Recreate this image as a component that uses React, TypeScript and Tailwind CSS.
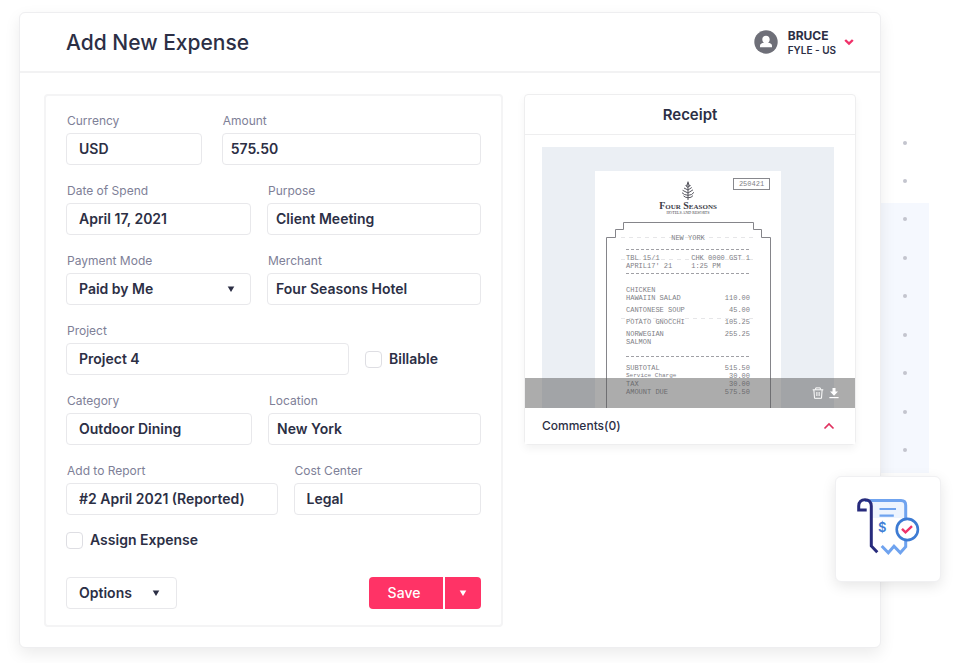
import { useState, type ReactNode } from "react";

const receiptItems = [
  { name: ["CHICKEN", "HAWAIIN SALAD"], price: "110.00", align: "align-bottom" },
  { name: ["CANTONESE SOUP"], price: "45.00", align: "align-top" },
  { name: ["POTATO GNOCCHI"], price: "105.25", align: "align-top" },
  { name: ["NORWEGIAN", "SALMON"], price: "255.25", align: "align-top" },
];

const receiptTotals = [
  ["SUBTOTAL", "515.50"],
  ["Service Charge", "30.00"],
  ["TAX", "30.00"],
  ["AMOUNT DUE", "575.50"],
];

export default function App() {
  const [billable, setBillable] = useState(false);
  const [assigned, setAssigned] = useState(false);

  return (
    <div className="relative flex min-h-screen items-start bg-white pt-3 pl-[19px] font-['Inter',sans-serif] text-[#2c2f45]">
      <main className="relative z-10 min-w-0 flex-1 rounded-md border border-[#eeeef0] bg-white shadow-[0_6px_16px_rgba(0,0,0,0.08)]">
        <header className="flex h-[60px] items-center justify-between border-b-2 border-[#f2f2f3] pr-[26px] pl-[46px]">
          <h1 className="pt-0.5 text-[21px] leading-7 font-medium">Add New Expense</h1>
          <button className="flex items-center text-left">
            <AvatarIcon />
            <span className="ml-[10px]">
              <span className="block text-xs leading-4 font-bold">BRUCE</span>
              <span className="block text-[10px] leading-3 font-semibold">FYLE - US</span>
            </span>
            <svg className="ml-2 h-2 w-[10px]" viewBox="0 0 10 8" fill="none">
              <path d="M1.2 2 5 5.6 8.8 2" stroke="#f0326a" strokeWidth="2.4" />
            </svg>
          </button>
        </header>

        <div className="grid grid-cols-[459fr_332fr] items-start gap-[21px] px-6 pt-[21px] pb-5">
          <form
            className="rounded-sm border-2 border-[#f4f4f5] px-5 pt-[17px] pb-4"
            onSubmit={(e) => e.preventDefault()}
          >
            <div className="flex flex-col gap-[18px]">
              <div className="grid grid-cols-[136fr_260fr] gap-5">
                <Field id="currency" label="Currency" value="USD" />
                <Field id="amount" label="Amount" value="575.50" tight />
              </div>

              <div className="grid grid-cols-[185fr_214fr] gap-4">
                <Field id="date" label="Date of Spend" value="April 17, 2021" />
                <Field id="purpose" label="Purpose" value="Client Meeting" tight />
              </div>

              <div className="grid grid-cols-[185fr_214fr] gap-4">
                <FieldFrame id="mode" label="Payment Mode">
                  <div className="relative">
                    <select
                      id="mode"
                      className="h-8 w-full appearance-none rounded border border-[#e8e8eb] bg-white px-3 text-sm font-semibold outline-none"
                    >
                      <option>Paid by Me</option>
                      <option>Paid by Company</option>
                    </select>
                    <Caret className="pointer-events-none absolute top-3 right-4" />
                  </div>
                </FieldFrame>
                <Field id="merchant" label="Merchant" value="Four Seasons Hotel" tight />
              </div>

              <div className="grid grid-cols-[283fr_116fr] items-end gap-4">
                <Field id="project" label="Project" value="Project 4" />
                <div className="flex h-8 items-center">
                  <Tick id="billable" label="Billable" checked={billable} onChange={setBillable} />
                </div>
              </div>

              <div className="grid grid-cols-[187fr_214fr] gap-4">
                <Field id="category" label="Category" value="Outdoor Dining" />
                <Field id="location" label="Location" value="New York" tight />
              </div>

              <div className="grid grid-cols-[211fr_187fr] gap-4">
                <Field id="report" label="Add to Report" value="#2 April 2021 (Reported)" />
                <Field id="cost" label="Cost Center" value="Legal" />
              </div>
            </div>

            <div className="mt-4">
              <Tick id="assign" label="Assign Expense" checked={assigned} onChange={setAssigned} />
            </div>

            <div className="mt-7 flex items-center justify-between">
              <button
                type="button"
                className="flex h-8 items-center gap-5 rounded border border-[#e8e8eb] pr-4 pl-3 text-sm font-semibold"
              >
                Options
                <Caret />
              </button>
              <div className="flex h-8 gap-0.5 text-white">
                <button type="submit" className="w-[74px] rounded-l bg-[#ff3366] pr-1 text-sm font-medium">
                  Save
                </button>
                <button
                  type="button"
                  aria-label="More save options"
                  className="flex w-9 items-center justify-center rounded-r bg-[#ff3366]"
                >
                  <Caret />
                </button>
              </div>
            </div>
          </form>

          <ReceiptPanel />
        </div>
      </main>

      <aside className="w-[79px] shrink-0 pt-[129px]">
        <div className="flex w-12 flex-col items-center gap-[34px]">
          <Dot />
          <Dot />
        </div>
        <div className="mt-5 flex h-[270px] w-12 flex-col items-center justify-between bg-[#f5f8fe] pt-[14px] pb-[21px]">
          {[1, 2, 3, 4, 5, 6, 7].map((n) => (
            <Dot key={n} />
          ))}
        </div>
      </aside>

      <div className="absolute top-[476px] right-[19px] z-20 flex h-[106px] w-[106px] items-center justify-center rounded-md border border-[#f0f0f2] bg-white shadow-[0_4px_14px_rgba(0,0,0,0.1)]">
        <ExpenseIcon />
      </div>
    </div>
  );
}

function ReceiptPanel() {
  return (
    <section className="rounded-sm border border-[#eeeeef] shadow-[0_4px_8px_rgba(0,0,0,0.05)]">
      <h2 className="border-b border-[#eeeeef] text-center text-[15px] leading-[39px] font-semibold">
        Receipt
      </h2>

      <div className="relative pt-3 pr-[21px] pl-[17px]">
        <div className="flex justify-center bg-[#ebeff4] pt-6">
          <Paper />
        </div>
        <div className="absolute inset-x-0 bottom-0 flex h-[30px] items-center justify-end gap-[5px] bg-[#595959]/50 pr-4">
          <button aria-label="Delete receipt">
            <svg className="h-3 w-3" viewBox="0 0 12 12" fill="none" stroke="#fff">
              <path d="M.7 2.8h10.6M3.7 2.6V.9h4.6v1.7M1.9 3l.6 8.3h7L10.1 3" />
              <path d="M4.6 5v4M6 5v4M7.4 5v4" strokeWidth=".7" />
            </svg>
          </button>
          <button aria-label="Download receipt">
            <svg className="h-3 w-[10px]" viewBox="0 0 10 12" fill="#fff">
              <path d="M3.5 1h3v3.6H9L5 8.8 1 4.6h2.5z" />
              <path d="M.4 10h9.2v1.2H.4z" />
            </svg>
          </button>
        </div>
      </div>

      <button className="flex h-9 w-full items-center justify-between bg-white pr-5 pl-[17px] text-xs font-medium">
        Comments(0)
        <svg className="h-2 w-3" viewBox="0 0 12 8" fill="none">
          <path d="M1.5 6.5 6 2l4.5 4.5" stroke="#e0315f" strokeWidth="1.7" />
        </svg>
      </button>
    </section>
  );
}

function Paper() {
  return (
    <div className="relative h-[237px] w-[186px] bg-white pt-[10px] text-[7px] leading-2 text-[#808086]">
      <svg className="absolute inset-0 h-full w-full" viewBox="0 0 186 237" fill="none">
        <path
          d="M11.5 237V66.5H20.5V58.5H28.5V51.5H158.5V58.5H166.5V66.5H175.5V237"
          stroke="#85858a"
        />
        <path
          d="M26 66.5H158M26 88.5H158M26 147.5H158"
          stroke="#e6e6e8"
          strokeDasharray="4 4"
        />
      </svg>
      <span className="absolute top-[7px] right-[11px] flex h-3 w-[37px] items-center justify-center border border-[#88888d] font-['Liberation_Mono',monospace]">
        250421
      </span>

      <div className="relative flex flex-col items-center font-['Liberation_Serif',serif] font-bold text-[#3c3c46]">
        <TreeIcon />
        <span className="text-[10px] leading-[10px] [font-variant:small-caps]">Four Seasons</span>
        <span className="text-[4px] leading-1 font-normal">HOTELS AND RESORTS</span>
      </div>

      <div className="relative mt-[19px] px-[31px] font-['Liberation_Mono',monospace]">
        <p className="text-center">NEW YORK</p>
        <Dashes className="mt-[7px]" />
        <div className="mt-1 flex justify-between whitespace-nowrap">
          <p>
            TBL 15/1
            <br />
            APRIL17&apos; 21
          </p>
          <p>
            CHK 0000 GST 1
            <br />
            1:25 PM
          </p>
        </div>
        <Dashes className="mt-[3px]" />
        <table className="mt-[10px] w-full">
          <tbody>
            {receiptItems.map((item) => (
              <tr key={item.price}>
                <td className="py-0.5">
                  {item.name.map((line) => (
                    <span key={line} className="block">
                      {line}
                    </span>
                  ))}
                </td>
                <td className={`py-0.5 text-right ${item.align}`}>{item.price}</td>
              </tr>
            ))}
          </tbody>
        </table>
        <Dashes className="mt-2" />
        <table className="mt-[7px] w-full">
          <tbody>
            {receiptTotals.map(([name, price]) => (
              <tr key={name}>
                <td className={`p-0 leading-2 ${name === "Service Charge" ? "text-[6px]" : ""}`}>
                  {name}
                </td>
                <td className="p-0 text-right">{price}</td>
              </tr>
            ))}
          </tbody>
        </table>
      </div>
    </div>
  );
}

function FieldFrame({ id, label, children }: { id: string; label: string; children: ReactNode }) {
  return (
    <div className="min-w-0">
      <label htmlFor={id} className="mb-1 block pl-px text-xs leading-4 text-[#7e8097]">
        {label}
      </label>
      {children}
    </div>
  );
}

type FieldProps = { id: string; label: string; value: string; tight?: boolean };

function Field({ id, label, value, tight }: FieldProps) {
  return (
    <FieldFrame id={id} label={label}>
      <input
        id={id}
        defaultValue={value}
        className={`block h-8 w-full rounded border border-[#e8e8eb] bg-white pb-0.5 text-sm font-semibold outline-none ${
          tight ? "px-2" : "px-3"
        }`}
      />
    </FieldFrame>
  );
}

type TickProps = { id: string; label: string; checked: boolean; onChange: (on: boolean) => void };

function Tick({ id, label, checked, onChange }: TickProps) {
  return (
    <div className="flex items-center gap-[7px]">
      <input
        id={id}
        type="checkbox"
        checked={checked}
        onChange={(e) => onChange(e.target.checked)}
        className="h-[17px] w-[17px] appearance-none rounded-sm border border-[#dedee3] checked:bg-[#ff3366]"
      />
      <label htmlFor={id} className="text-sm leading-[18px] font-semibold">
        {label}
      </label>
    </div>
  );
}

function Caret({ className = "" }: { className?: string }) {
  return (
    <svg className={`h-2 w-2 ${className}`} viewBox="0 0 8 8" fill="currentColor">
      <path d="M.7 1.5h6.6L4 7z" />
    </svg>
  );
}

function Dashes({ className }: { className: string }) {
  return (
    <svg className={`block h-px w-full ${className}`}>
      <path d="M0 .5H400" stroke="#a0a0a5" strokeDasharray="3 2" />
    </svg>
  );
}

function Dot() {
  return <span className="h-1 w-1 rounded-full bg-[#c3c5ce]" />;
}

function AvatarIcon() {
  return (
    <svg className="h-6 w-6" viewBox="0 0 24 24">
      <circle cx="12" cy="12" r="11.7" fill="#6e6f78" />
      <path
        d="M12 5.7c2.3 0 3.7 1.6 3.7 3.7 0 1.5-.7 2.7-1.7 3.4 2.4.3 4 1.2 4 2.9v1.5H6v-1.5c0-1.7 1.6-2.6 4-2.9-1-.7-1.7-1.9-1.7-3.4 0-2.1 1.4-3.7 3.7-3.7z"
        fill="#fff"
      />
    </svg>
  );
}

function TreeIcon() {
  return (
    <svg className="h-5 w-4" viewBox="0 0 16 20" fill="none" stroke="#45454f" strokeWidth=".9">
      <path d="M8 .5V19" />
      <path d="M8 1.5 6.5 5M8 1.5 9.5 5M8 6.5 5.5 4.5M8 6l2.6-1.5M8 9 4 7M8 9l3.8-2.5M8 12 2.6 9.3M8 12l5-3.2M8 14.3Q4 14 2 11.7M8 14.3q4 0 6-3M8 16.8Q5 16.5 3.5 14.8M8 16.8q3.500 0 5-2.2" />
    </svg>
  );
}

function ExpenseIcon() {
  return (
    <svg className="h-[66px] w-[66px]" viewBox="855 496 66 66" fill="none">
      <path d="M868 501h33q5 0 5 5v12h-34.5v-12z" fill="#edf4fe" />
      <path
        d="M865 500.5h36q4.7 0 4.7 4.7V519M905.7 540v6.7l-5.4 6-6.3-6.4-5.7 6.4-6.6-6.7"
        stroke="#6fa3ef"
        strokeWidth="3"
      />
      <path
        d="M866.7 510h-8v-4c0-4 2.6-6.3 6.3-6.3s6.3 2.3 6.3 6.3v40l6 6.3"
        stroke="#272b7c"
        strokeWidth="3"
      />
      <path d="M879.5 509H896M879.5 515.7h14.3" stroke="#6fa3ef" strokeWidth="2.2" />
      <text x="882.3" y="532" textAnchor="middle" fontSize="13" fontWeight="600" fill="#3f7fd6">
        $
      </text>
      <circle cx="907.3" cy="529.5" r="10.6" fill="#fff" stroke="#3d7bd3" strokeWidth="2.6" />
      <path d="m902 528.8 3.5 3.6 6.5-6.2" stroke="#f0326a" strokeWidth="2.4" />
    </svg>
  );
}
